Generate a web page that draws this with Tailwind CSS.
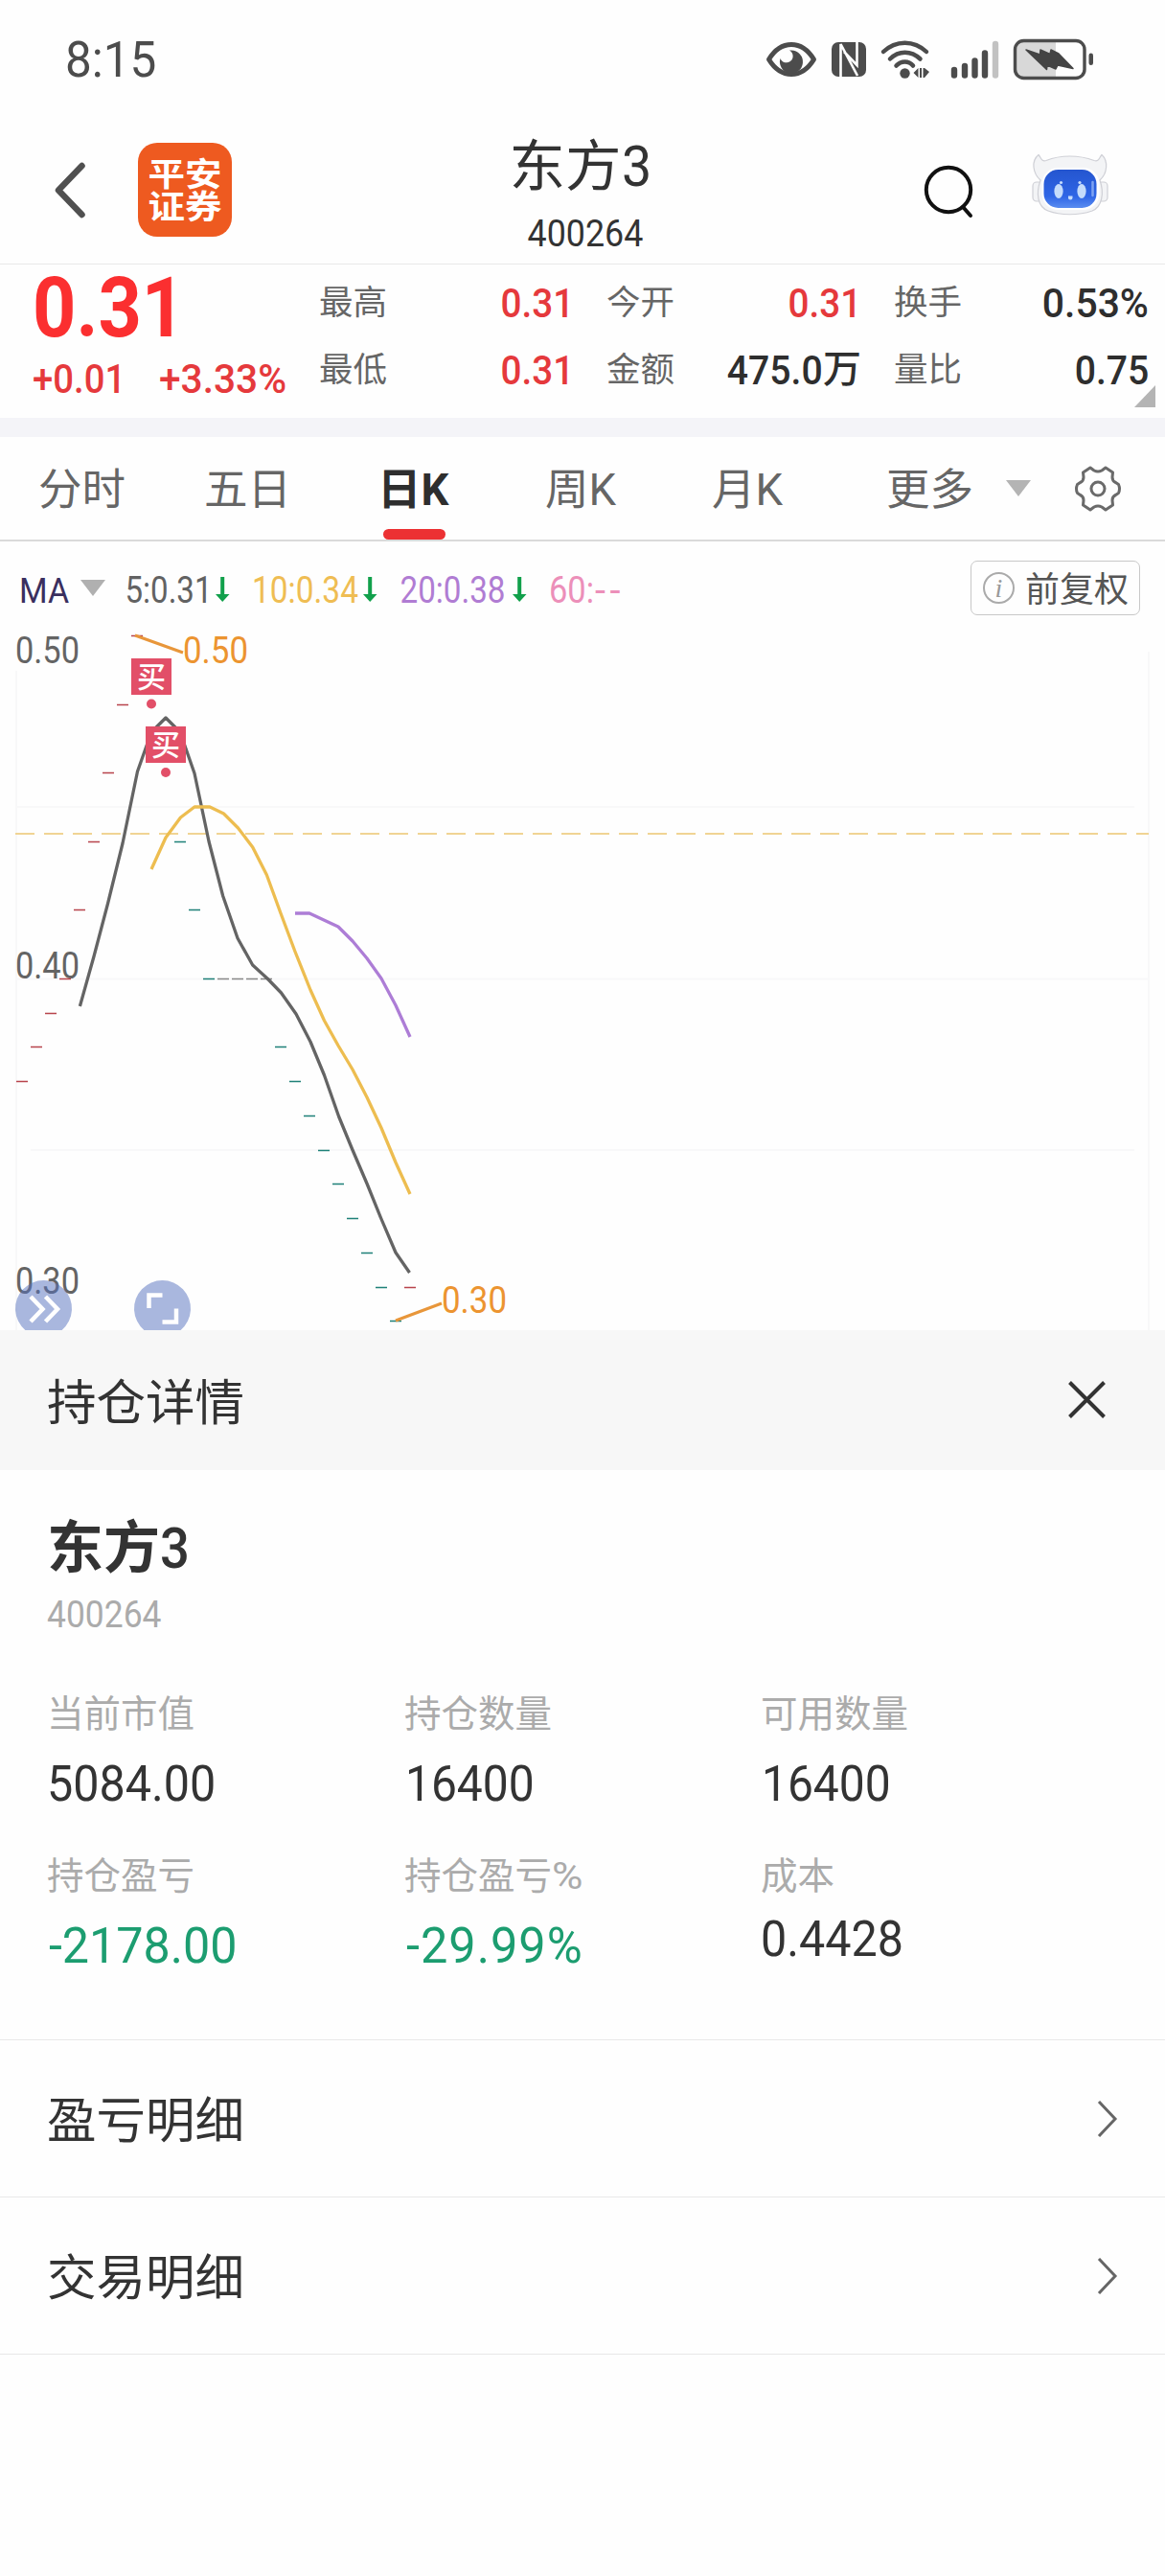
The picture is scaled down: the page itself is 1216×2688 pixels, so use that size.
<!DOCTYPE html>
<html lang="zh-CN">
<head>
  <meta charset="UTF-8">
  <meta name="viewport" content="width=device-width, initial-scale=1.0">
  <title>东方3 400264</title>
  <script src="https://cdn.jsdelivr.net/npm/@tailwindcss/browser@4"></script>
</head>
<body class="w-[1216px] h-[2688px] overflow-hidden bg-[#fefefe] font-[Roboto,'Noto_Sans_CJK_SC',sans-serif] text-[#333] whitespace-nowrap">

  <!-- 状态栏 -->
  <div class="h-[123px] pl-[68px] pr-[74px] flex items-center justify-between text-[#4c4c4c]">
    <span class="text-[51px] leading-[60px] pt-[2px] inline-block origin-left scale-x-[0.97]">8:15</span>
    <svg class="w-[344px] h-[44px]" viewBox="799 39 344 44" fill="none">
      <!-- 护眼 -->
      <path d="M803.500 61C809 52 817 45.500 827 45.500S845 52 850.500 61C845 70 837 76.500 827 76.500S809 70 803.500 61Z" stroke="#4c4c4c" stroke-width="5" stroke-linejoin="round"/>
      <path d="M827 51.500A12 12 0 1 1 815.500 60A6.800 6.800 0 1 0 825 51.500Z" fill="#4c4c4c"/>
      <!-- NFC -->
      <rect x="869" y="43" width="36" height="36" rx="7" fill="#4c4c4c"/>
      <path d="M878.500 79V45L896 78M882 53L895.500 67V43" stroke="#fefefe" stroke-width="2.600"/>
      <!-- WiFi -->
      <g stroke="#4c4c4c" stroke-width="4.500" stroke-linecap="round">
        <path d="M923 53C936 40.500 955 40.500 968 53"/>
        <path d="M930 60.500C939 51.500 952 51.500 961.500 60.500"/>
        <path d="M936.500 67.500C941.500 62 949.500 62 954 67.500"/>
      </g>
      <circle cx="945.500" cy="75.500" r="5.200" fill="#4c4c4c"/>
      <path d="M954.500 75L959.500 70V80ZM961 70H963V80H961ZM964.500 70H966L971 74L966 80H964.500Z" fill="#4c4c4c"/>
      <!-- 信号 -->
      <g stroke-width="6.400" stroke-linecap="round" stroke="#4c4c4c">
        <path d="M997 72V77.500M1008 68V77.500M1018.500 62.500V77.500M1029 54.500V77.500"/>
        <path d="M1040 45V77.500" stroke="#c2c2c2"/>
      </g>
      <!-- 电池 -->
      <path d="M1070 42H1103V80H1070Q1061 80 1061 70V52Q1061 42 1070 42Z" fill="#d8d8d8"/>
      <rect x="1060.500" y="41.500" width="72.500" height="39" rx="9" stroke="#4c4c4c" stroke-width="3.400"/>
      <path d="M1072 51L1086.500 56L1087 51L1097 55.500L1098 51L1106 55L1121 70.500L1105 67L1103 71L1094 67L1093.500 71.500Z" fill="#444" stroke="#444" stroke-width="1.500" stroke-linejoin="round"/>
      <rect x="1137.500" y="54.500" width="4.500" height="12.500" rx="2.200" fill="#4c4c4c"/>
    </svg>
  </div>

  <!-- 顶部导航 -->
  <header class="h-[153px] border-b border-[#e8e8e8] grid grid-cols-[480px_256px_480px] items-start">
    <div class="flex items-center gap-[52px] pl-[56px] pt-[26px]">
      <svg class="w-[36px] h-[60px]" viewBox="0 0 36 60" fill="none" stroke="#505050" stroke-width="6.500" stroke-linecap="round" stroke-linejoin="round">
        <path d="M29.500 5L5 30.500L29.500 56"/>
      </svg>
      <div class="w-[98px] h-[98px] rounded-[20px] bg-[#ee5a20] flex items-center justify-center text-white text-[38.500px] font-bold leading-[38px]">
        <div class="scale-y-[0.88] pt-[4px]">
          <p>平安</p>
          <p>证券</p>
        </div>
      </div>
    </div>
    <div class="flex flex-col items-center">
      <h1 class="text-[58.500px] leading-[70px] mt-[16px] -ml-[3px]">东方<span class="inline-block origin-left scale-x-[0.95]">3</span></h1>
      <p class="text-[38.500px] leading-[50px] mt-[10px] ml-[5px] scale-x-[0.93]">400264</p>
    </div>
    <div class="flex justify-end gap-[58px] pt-[34px] pr-[57px]">
      <svg class="w-[56px] h-[72px]" viewBox="964 157 56 72" fill="none" stroke="#111" stroke-width="4" stroke-linecap="round">
        <circle cx="993" cy="198" r="23.200"/>
        <path d="M1009 217L1016 225"/>
      </svg>
      <!-- 智能助手 -->
      <svg class="w-[84px] h-[72px]" viewBox="1076 157 84 72">
        <defs>
          <linearGradient id="face" x1="0" y1="0" x2="0" y2="1">
            <stop offset="0" stop-color="#2455cf"/>
            <stop offset="0.700" stop-color="#2f66e6"/>
            <stop offset="1" stop-color="#5b8df0"/>
          </linearGradient>
        </defs>
        <g fill="#f3f4f6" stroke="#cfd0d6" stroke-width="1.200">
          <rect x="1079" y="190" width="10" height="20" rx="4"/>
          <rect x="1147" y="190" width="10" height="20" rx="4"/>
          <path d="M1087 188C1079 181 1077 168 1085 161.500C1088 165 1088 169 1093 167.500C1108 161.500 1127 161.500 1143 167.500C1148 169 1148 165 1151 161.500C1158 168 1157 181 1149 188C1154 202 1151 216 1141 220C1127 225 1108 225 1095 220C1084 216 1082 202 1087 188Z"/>
        </g>
        <rect x="1088.500" y="175" width="60" height="44" rx="17" fill="#fff"/>
        <rect x="1090.500" y="177" width="55" height="40" rx="15" fill="url(#face)"/>
        <g fill="#c5dcfb">
          <ellipse cx="1106" cy="199.500" rx="4.600" ry="7.500"/>
          <ellipse cx="1130" cy="199.500" rx="4.600" ry="7.500"/>
          <circle cx="1108.500" cy="190.500" r="1.600"/>
          <circle cx="1128" cy="190.500" r="1.600"/>
          <path d="M1116 204.500H1120.500V206.500Q1120.500 208.500 1118.200 208.500T1116 206.500Z"/>
        </g>
        <path d="M1141.500 190V204" stroke="#7fa4f2" stroke-width="2.500" stroke-linecap="round"/>
      </svg>
    </div>
  </header>

  <!-- 行情 -->
  <section class="relative h-[160px] flex text-[35.500px] text-[#666]">
    <div class="w-[333px] pl-[34px] pt-px text-[#e5393c]">
      <div class="text-[87px] leading-[88px] font-bold text-[#fb2f30] origin-left scale-x-[0.91]">0.31</div>
      <div class="flex text-[43px] leading-[60px] font-medium">
        <span class="w-[132px] origin-left scale-x-[0.89]">+0.01</span>
        <span class="origin-left scale-x-[0.945]">+3.33%</span>
      </div>
    </div>
    <div class="grid grid-cols-[266px_34px_266px_34px_266px] grid-rows-[70px_70px] pt-[5px]">
      <div class="flex items-center justify-between"><span class="pt-[2px]">最高</span><span class="text-[43px] font-medium text-[#e5393c] origin-right scale-x-[0.9]">0.31</span></div>
      <i></i>
      <div class="flex items-center justify-between"><span class="pt-[2px]">今开</span><span class="text-[43px] font-medium text-[#e5393c] origin-right scale-x-[0.9]">0.31</span></div>
      <i></i>
      <div class="flex items-center justify-between"><span class="pt-[2px]">换手</span><span class="text-[43px] font-medium text-[#2e2e2e] origin-right scale-x-[0.95]">0.53%</span></div>
      <div class="flex items-center justify-between"><span class="pt-[2px]">最低</span><span class="text-[43px] font-medium text-[#e5393c] origin-right scale-x-[0.9]">0.31</span></div>
      <i></i>
      <div class="flex items-center justify-between"><span class="pt-[2px]">金额</span><span class="flex text-[43px] leading-[60px] font-medium text-[#2e2e2e]"><span class="origin-right scale-x-[0.91]">475.0</span><span class="text-[40px]">万</span></span></div>
      <i></i>
      <div class="flex items-center justify-between"><span class="pt-[2px]">量比</span><span class="text-[43px] font-medium text-[#2e2e2e] origin-right scale-x-[0.91]">0.75</span></div>
    </div>
    <svg class="absolute right-[10px] bottom-[11px] w-[22px] h-[23px]" viewBox="0 0 22 23"><path d="M22 0V23H0Z" fill="#b4b4b4"/></svg>
  </section>
  <div class="h-[20px] bg-[#f4f4f8]"></div>

  <!-- 周期切换 -->
  <nav class="h-[109px] border-b-2 border-[#dadada] flex pl-[40px] text-[45.500px] leading-[111px] text-[#666]">
    <span class="w-[173px]">分时</span>
    <span class="w-[181px]">五日</span>
    <span class="w-[175px] h-[107px] font-bold text-[#2e2e2e] relative">日K<i class="absolute left-[6px] bottom-0 w-[65px] h-[11px] rounded-full bg-[#ec3133]"></i></span>
    <span class="w-[174px]">周K</span>
    <span class="w-[182px]">月K</span>
    <span class="w-[125px]">更多</span>
    <svg class="w-[26px] h-[17px] mt-[45px]" viewBox="0 0 26 17"><path d="M0 0H26L13 17Z" fill="#b4b4b4"/></svg>
    <svg class="w-[50px] h-[50px] mt-[29px] ml-[45px]" viewBox="0 0 50 50" fill="none" stroke="#6a6a6a" stroke-width="3" stroke-linejoin="round">
      <path d="M17 3L21 6Q25 8 29 6L33 3L40.500 8L40 13Q40 17 43.500 18.500L46.500 20.500Q48.500 25 46.500 29.500L43.500 31.500Q40 33 40 37L40.500 42L33 47L29 44Q25 42 21 44L17 47L9.500 42L10 37Q10 33 6.500 31.500L3.500 29.500Q1.500 25 3.500 20.500L6.500 18.500Q10 17 10 13L9.500 8Z"/>
      <circle cx="25" cy="25" r="7"/>
    </svg>
  </nav>

  <!-- 均线指标 -->
  <div class="h-[98px] flex items-start">
    <svg class="w-[1013px] h-[98px] text-[38px]" viewBox="0 565 1013 98">
      <text x="20" y="628.500" font-size="37" fill="#3a2f5e" textLength="52" lengthAdjust="spacingAndGlyphs">MA</text>
      <path d="M84 605H110L97 622Z" fill="#b0b0b0"/>
      <text x="130.500" y="628.500" fill="#626262" textLength="91" lengthAdjust="spacingAndGlyphs">5:0.31</text>
      <text x="263" y="628.500" fill="#efbd53" textLength="111" lengthAdjust="spacingAndGlyphs">10:0.34</text>
      <text x="417.500" y="628.500" fill="#b07cd3" textLength="110" lengthAdjust="spacingAndGlyphs">20:0.38</text>
      <text x="573" y="628.500" fill="#ec8fb9" textLength="47" lengthAdjust="spacingAndGlyphs">60:</text>
      <text x="621" y="628.500" fill="#ec8fb9" textLength="11" lengthAdjust="spacingAndGlyphs">-</text>
      <text x="636.500" y="628.500" fill="#ec8fb9" textLength="11" lengthAdjust="spacingAndGlyphs">-</text>
      <g fill="#11a04b">
        <path d="M230.200 602H234.200V620H239.500L232.200 628L225 620H230.200Z"/>
        <path d="M384.200 602H388.200V620H393.500L386.200 628L379 620H384.200Z"/>
        <path d="M540.200 602H544.200V620H549.500L542.200 628L535 620H540.200Z"/>
      </g>
    </svg>
    <button class="w-[177px] h-[57px] mt-[20px] pl-[12px] border border-[#c8c8c8] rounded-[7px] flex items-center gap-[11px] text-[36px] text-[#555]">
      <span class="w-[33px] h-[33px] rounded-full border-2 border-[#aaa] text-[#999] font-['Liberation_Serif'] italic text-[28px] leading-[29px] text-center">i</span>
      <span class="pt-[4px]">前复权</span>
    </button>
  </div>

  <!-- 日K图 -->
  <svg class="w-[1216px] h-[725px] block overflow-visible text-[38px]" viewBox="0 663 1216 725" fill="none">
    <g stroke="#f8f8f9" stroke-width="2">
      <path d="M17 700V1388M1199 680V1388M17 842H1184M17 1021.500H1199M32 1200H1184"/>
    </g>
    <path d="M16 870H1199" stroke="#f0d494" stroke-width="2" stroke-dasharray="20 10"/>
    <g fill="#646464">
      <text x="16" y="692" textLength="67" lengthAdjust="spacingAndGlyphs">0.50</text>
      <text x="16" y="1021" textLength="67" lengthAdjust="spacingAndGlyphs">0.40</text>
      <text x="16" y="1350" textLength="67" lengthAdjust="spacingAndGlyphs">0.30</text>
    </g>
    <!-- 一字板 -->
    <g stroke="#b8444c" stroke-width="1.300">
      <path d="M17 1128.500h12M32 1092.500h12M47 1057.500h12M62 1021.500h12M77 949.500h12M92 878.500h12M107 806.500h12M122 735.500h12M137 663.500h12M422 1343.500h12"/>
    </g>
    <path d="M182 878.500h12M197 949.500h12M212 1021.500h12M287 1092.500h12M302 1128.500h12M317 1164.500h12M332 1200.500h12M347 1235.500h12M362 1271.500h12M377 1307.500h12M392 1343.500h12M407 1378.500h12" stroke="#1f8178" stroke-width="1.300"/>
    <path d="M227 1021.500h12M242 1021.500h12M257 1021.500h12M272 1021.500h12" stroke="#888" stroke-width="1.300"/>
    <!-- 均线 -->
    <g stroke-width="3.300" stroke-linejoin="round">
      <path d="M83.400 1050L98 998L112.500 943L128 880L143.500 805L158 764L173 749L188 764L203 807L218 878L232.700 935L248 979L263.700 1007L279 1021L293.500 1036L309 1058L324 1087L338.500 1122L353.600 1165L368 1200L383 1235L398 1272L413 1307L427.500 1328" stroke="#646464"/>
      <path d="M158 907L173 874L188.500 853L203 842H219L233.500 849L248.500 864L263.700 884L278.400 913L293 953L308 993L324 1033L338.500 1065L353 1091L368 1116L383 1145L398 1177L413 1213L428 1246" stroke="#edbd50"/>
      <path d="M308 953H323L353 967L368 982L383 1000L398 1021L413 1049L428 1082" stroke="#ad7dd6"/>
    </g>
    <!-- 最高/最低价 -->
    <g stroke="#e8963a" stroke-width="3">
      <path d="M141 663L191 681M413 1378L461 1360"/>
    </g>
    <g fill="#ec9430">
      <text x="191" y="692" textLength="68" lengthAdjust="spacingAndGlyphs">0.50</text>
      <text x="461" y="1370" textLength="68" lengthAdjust="spacingAndGlyphs">0.30</text>
    </g>
    <!-- 买点 -->
    <g fill="#e24f68">
      <rect x="137" y="687" width="42" height="38"/>
      <circle cx="158" cy="734.500" r="5"/>
      <rect x="152" y="758" width="42" height="38"/>
      <circle cx="173" cy="806" r="5"/>
    </g>
    <g fill="#fff" font-size="30" font-weight="500" text-anchor="middle">
      <text x="158" y="717">买</text>
      <text x="173" y="788">买</text>
    </g>
    <g fill="#5470be" fill-opacity="0.500">
      <path d="M26.400 1388A29.500 29.500 0 1 1 64.600 1388Z"/>
      <path d="M150.400 1388A29.500 29.500 0 1 1 188.600 1388Z"/>
    </g>
    <g stroke="#fff" stroke-width="4.500">
      <path d="M32 1353L44.500 1366L32 1379M47.500 1353L60 1366L47.500 1379"/>
      <path d="M155.500 1365V1351.500H169.500M184 1365.500V1379.500H169.500"/>
    </g>
  </svg>

  <!-- 持仓详情 -->
  <section>
    <div class="h-[146px] bg-[#f7f7f7] flex items-center justify-between pl-[49px] pr-[62px] text-[51.500px] pt-[7px]">
      <h2>持仓详情</h2>
      <svg class="w-[39px] h-[39px] -mt-[9px]" viewBox="0 0 39 39" stroke="#333" stroke-width="4"><path d="M1.500 1.500L37.500 37.500M37.500 1.500L1.500 37.500"/></svg>
    </div>
    <div class="pl-[49px] pt-[46px]">
      <h3 class="text-[59px] leading-[72px] font-bold">东方<span class="inline-block font-medium origin-left scale-x-[0.92]">3</span></h3>
      <p class="text-[38.500px] leading-[50px] mt-[8px] text-[#ababab] w-[200px] origin-left scale-x-[0.92]">400264</p>
    </div>
    <dl class="grid grid-cols-[373px_372px_372px] pl-[49px] pt-[53px] h-[418px] text-[51px] content-start">
      <div class="h-[169px]">
        <dt class="text-[38.500px] leading-[52px] text-[#ababab]">当前市值</dt>
        <dd class="leading-[60px] mt-[17px] origin-left scale-x-[0.95]">5084.00</dd>
      </div>
      <div class="h-[169px]">
        <dt class="text-[38.500px] leading-[52px] text-[#ababab]">持仓数量</dt>
        <dd class="leading-[60px] mt-[17px] pl-px origin-left scale-x-[0.94]">16400</dd>
      </div>
      <div class="h-[169px]">
        <dt class="text-[38.500px] leading-[52px] text-[#ababab]">可用数量</dt>
        <dd class="leading-[60px] mt-[17px] pl-px origin-left scale-x-[0.94]">16400</dd>
      </div>
      <div>
        <dt class="text-[38.500px] leading-[52px] text-[#ababab]">持仓盈亏</dt>
        <dd class="leading-[60px] mt-[17px] pl-[2px] text-[#1c9d70] origin-left scale-x-[0.985]">-2178.00</dd>
      </div>
      <div>
        <dt class="text-[38.500px] leading-[52px] text-[#ababab]">持仓盈亏<span class="inline-block origin-left scale-x-[1.15]">%</span></dt>
        <dd class="leading-[60px] mt-[17px] pl-[2px] text-[#1c9d70] tracking-[1px] origin-left scale-x-[0.99]">-29.99%</dd>
      </div>
      <div>
        <dt class="text-[38.500px] leading-[52px] text-[#ababab]">成本</dt>
        <dd class="leading-[60px] mt-[10px] origin-left scale-x-[0.95]">0.4428</dd>
      </div>
    </dl>
    <ul class="text-[51.500px] border-t border-[#e8e8e8]">
      <li class="h-[164px] border-b border-[#e8e8e8] flex items-center justify-between pl-[49px] pr-[49px]">
        <span class="pt-[7px]">盈亏明细</span>
        <svg class="w-[22px] h-[38px]" viewBox="0 0 22 38" fill="none" stroke="#666" stroke-width="3"><path d="M2 1L19 19L2 37"/></svg>
      </li>
      <li class="h-[164px] border-b border-[#e8e8e8] flex items-center justify-between pl-[49px] pr-[49px]">
        <span class="pt-[7px]">交易明细</span>
        <svg class="w-[22px] h-[38px]" viewBox="0 0 22 38" fill="none" stroke="#666" stroke-width="3"><path d="M2 1L19 19L2 37"/></svg>
      </li>
    </ul>
  </section>
</body>
</html>
